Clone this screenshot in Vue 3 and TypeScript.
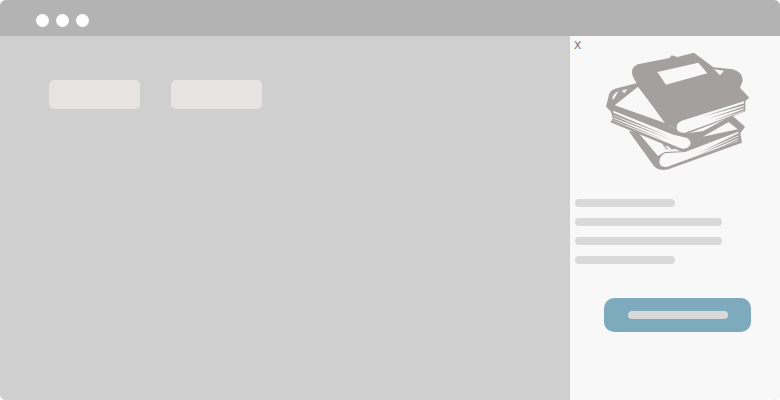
<script setup lang="ts">
const dots = [0, 1, 2]
const tabs = [0, 1]
const lines = ['short', 'long', 'long', 'short']
</script>

<template>
  <div class="window">
    <header class="titlebar">
      <span v-for="d in dots" :key="d" class="dot"></span>
    </header>
    <div class="body">
      <main class="content">
        <div v-for="t in tabs" :key="t" class="tab"></div>
      </main>
      <aside class="panel">
        <span class="close">x</span>
        <svg class="books" viewBox="0 0 630 450" width="210" height="150" aria-hidden="true">
          <!-- bottom book -->
          <path class="ink" d="M176 285 L250 388 Q264 407 295 400 L516 320 L511 292 L525 272 L486 238 L400 285 L300 300 Z" />
          <path class="paper" d="M200 284 L264 360 L284 348 L345 345 L300 290 Z" />
          <path class="ink" d="M268 310 L288 340 L316 340 L292 322 Z" />
          <path class="paper" d="M284 330 L294 339 L304 339 L294 331 Z" />
          <path class="paper" d="M505 287 L375 337 L345 348 L284 352 Q268 362 268 378 Q270 396 292 392 L505 315 Z" />
          <path class="paper" d="M398 302 L476 258 L503 280 Z" />
          <path class="ink" d="M506 291 L385 352 L506 298 Z" />
          <path class="ink" d="M506 300 L375 362 L506 306 Z" />
          <path class="ink" d="M506 308 L390 363 L506 313 Z" />
          <!-- middle book -->
          <path class="ink" d="M108 212 L116 180 Q118 165 135 158 L205 140 L300 270 L360 300 Q378 320 364 336 Q350 350 330 345 L120 258 L130 250 L122 226 Z" />
          <path class="paper" d="M134 208 L204 152 L287 262 Z" />
          <path class="paper" d="M127 192 Q126 174 146 166 L132 188 Z" />
          <path class="paper" d="M155 164 L172 159 L163 172 Z" />
          <path class="paper" d="M130 224 L310 296 Q330 300 352 306 Q368 318 358 330 Q348 342 330 336 L130 254 Z" />
          <path class="ink" d="M127 229 L295 301 L127 236 Z" />
          <path class="ink" d="M127 238 L305 312 L127 244 Z" />
          <path class="ink" d="M127 246 L285 313 L127 252 Z" />
          <!-- top book -->
          <path class="ink" d="M186 112 Q184 92 204 85 L298 66 L305 58 L322 63 L372 50 L430 94 L488 100 Q518 108 518 135 L510 155 L538 185 L526 195 L526 226 L345 296 Q315 298 312 276 L285 262 L206 150 Q188 126 186 112 Z" />
          <path class="paper" d="M262 108 L385 80 L412 112 L288 146 Z" />
          <path class="paper" d="M432 100 L462 104 L450 118 Z" />
          <path class="paper" d="M522 196 L335 254 Q318 262 320 278 Q325 292 345 290 L522 226 Z" />
          <path class="ink" d="M523 202 L395 243 L523 208 Z" />
          <path class="ink" d="M523 211 L410 250 L523 216 Z" />
          <path class="ink" d="M523 219 L425 256 L523 224 Z" />
        </svg>
        <div class="lines">
          <span v-for="(l, i) in lines" :key="i" class="line" :class="l"></span>
        </div>
        <button class="cta" type="button"><span class="line short"></span></button>
      </aside>
    </div>
  </div>
</template>

<style scoped>
.window {
  width: 780px;
  height: 400px;
  border-radius: 6px;
  overflow: hidden;
  display: flex;
  flex-direction: column;
  background: #cfcfcf;
}
.titlebar {
  height: 36px;
  flex: none;
  box-sizing: border-box;
  background: #b3b3b3;
  padding: 4px 0 0 36px;
  display: flex;
  align-items: center;
  gap: 7px;
}
.dot {
  width: 13px;
  height: 13px;
  border-radius: 50%;
  background: #fff;
}
.body {
  flex: 1;
  display: flex;
  min-height: 0;
}
.content {
  flex: 1;
  display: flex;
  align-items: flex-start;
  gap: 31px;
  padding: 44px 0 0 49px;
  background: #cfcfcf;
}
.tab {
  width: 91px;
  height: 29px;
  border-radius: 5px;
  background: #e6e3e2;
}
.panel {
  position: relative;
  width: 210px;
  flex: none;
  background: #f8f8f8;
  display: flex;
  flex-direction: column;
}
.close {
  position: absolute;
  left: 4px;
  top: -1px;
  font: 14px/18px "Open Sans", sans-serif;
  color: #7c7c7c;
}
.books {
  display: block;
  flex: none;
}
.ink {
  fill: #a4a09f;
}
.paper {
  fill: #f8f8f8;
}
.lines {
  display: flex;
  flex-direction: column;
  gap: 11px;
  padding: 13px 0 0 5px;
}
.line {
  display: block;
  height: 8px;
  border-radius: 4px;
  background: #d9d9d9;
}
.short {
  width: 100px;
}
.long {
  width: 147px;
}
.cta {
  align-self: flex-start;
  margin: 34px 0 0 34px;
  width: 147px;
  height: 34px;
  border: 0;
  padding: 0;
  border-radius: 10px;
  background: #7eaabd;
  display: flex;
  align-items: center;
  justify-content: center;
}
</style>
